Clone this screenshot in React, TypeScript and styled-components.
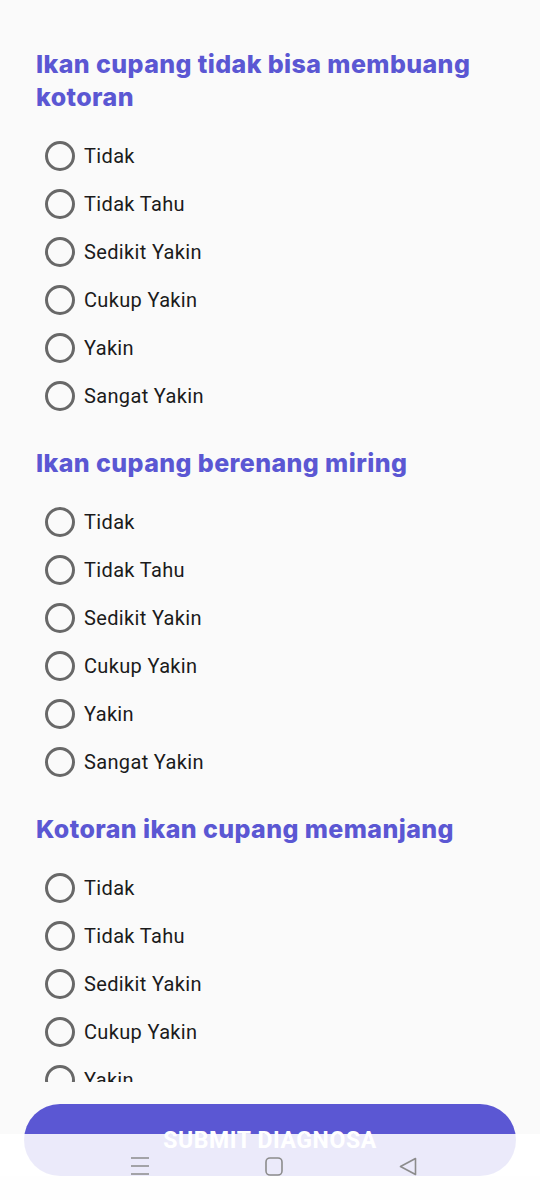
import React from "react";
import styled, { createGlobalStyle } from "styled-components";

const GlobalStyle = createGlobalStyle`
  html, body { margin: 0; padding: 0; background: #fafafa; }
  * { box-sizing: border-box; }
`;

const Screen = styled.div`
  position: relative;
  width: 540px;
  height: 1200px;
  overflow: hidden;
  background: #fafafa;
  display: flex;
  flex-direction: column;
`;

const ScrollArea = styled.div`
  height: 1082px;
  overflow: hidden;
  padding: 48px 36px 0 36px;
  display: flex;
  flex-direction: column;
  gap: 27px;
`;

const Section = styled.section`
  display: flex;
  flex-direction: column;
`;

const Question = styled.h2`
  margin: 0 0 18px 0;
  font-family: "Inter", "Open Sans", sans-serif;
  font-weight: 800;
  font-size: 25px;
  line-height: 33px;
  color: #5b57d3;
  letter-spacing: 0.4px;
`;

const OptionList = styled.div`
  display: flex;
  flex-direction: column;
`;

const OptionRow = styled.label`
  height: 48px;
  display: flex;
  align-items: center;
  gap: 9px;
  padding-left: 9px;
  font-family: Roboto, "Liberation Sans", sans-serif;
  font-size: 20px;
  letter-spacing: 0.35px;
  color: #1b1b1b;
`;

const RadioCircle = styled.span`
  width: 30px;
  height: 30px;
  border-radius: 50%;
  border: 3px solid #686868;
  flex-shrink: 0;
`;

const ButtonArea = styled.div`
  padding: 22px 24px 0 24px;
`;

const SubmitButton = styled.button`
  width: 100%;
  height: 72px;
  border: none;
  border-radius: 36px;
  background: #5b57d3;
  color: #ffffff;
  font-family: Roboto, "Liberation Sans", sans-serif;
  font-weight: 700;
  font-size: 23px;
  letter-spacing: 0.6px;
  display: flex;
  align-items: center;
  justify-content: center;
  cursor: pointer;
`;

const BottomStrip = styled.div`
  flex: 1;
  background: #fefefe;
`;

const NavBar = styled.div`
  position: absolute;
  left: 0;
  right: 0;
  top: 1134px;
  height: 42px;
  overflow: hidden;
  background: rgba(255, 255, 255, 0.88);
  display: flex;
  align-items: flex-start;
  padding: 23px 0 0 131px;
  gap: 116px;
`;

const NavIcon = styled.svg`
  width: 18px;
  height: 20px;
  display: block;
  flex-shrink: 0;
`;

const questions = [
  "Ikan cupang tidak bisa membuang kotoran",
  "Ikan cupang berenang miring",
  "Kotoran ikan cupang memanjang",
];

const options = ["Tidak", "Tidak Tahu", "Sedikit Yakin", "Cukup Yakin", "Yakin", "Sangat Yakin"];

export default function App() {
  return (
    <>
      <GlobalStyle />
      <Screen>
        <ScrollArea>
          {questions.map((q) => (
            <Section key={q}>
              <Question>{q}</Question>
              <OptionList>
                {options.map((o) => (
                  <OptionRow key={o}>
                    <RadioCircle />
                    <span>{o}</span>
                  </OptionRow>
                ))}
              </OptionList>
            </Section>
          ))}
        </ScrollArea>
        <ButtonArea>
          <SubmitButton>SUBMIT DIAGNOSA</SubmitButton>
        </ButtonArea>
        <BottomStrip />
        <NavBar>
          <NavIcon viewBox="0 0 18 20">
            <path d="M0 1 H18 M0 9 H18 M0 17 H18" stroke="#8c8c8c" strokeWidth="1.6" fill="none" />
          </NavIcon>
          <NavIcon viewBox="0 0 18 20">
            <rect x="1" y="1" width="16" height="17" rx="4" stroke="#8c8c8c" strokeWidth="1.6" fill="none" />
          </NavIcon>
          <NavIcon viewBox="0 0 18 20">
            <path d="M16.5 1.5 L1.5 9.5 L16.5 17.5 Z" stroke="#8c8c8c" strokeWidth="1.6" strokeLinejoin="round" fill="none" />
          </NavIcon>
        </NavBar>
      </Screen>
    </>
  );
}
